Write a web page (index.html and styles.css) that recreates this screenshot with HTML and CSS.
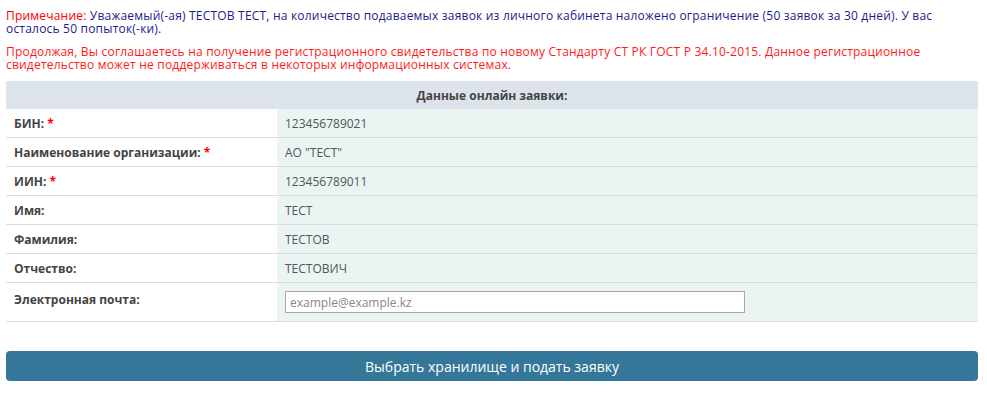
FILE: index.html
```html
<!DOCTYPE html>
<html lang="ru">
<head>
    <meta charset="UTF-8">
    <meta name="viewport" content="width=device-width, initial-scale=1.0">
    <link rel="stylesheet" href="styles.css">
    <title>Онлайн заявка</title>
</head>
<body>
    <div class="request">
        <p class="request__note">
            <span class="request__note-title">Примечание:</span> Уважаемый(-ая) ТЕСТОВ ТЕСТ, на количество подаваемых заявок из личного кабинета наложено ограничение (50 заявок за 30 дней). У вас осталось 50 попыток(-ки).
        </p>
        <p class="request__warning">
            Продолжая, Вы соглашаетесь на получение регистрационного свидетельства по новому Стандарту СТ РК ГОСТ Р 34.10-2015. Данное регистрационное свидетельство может не поддерживаться в некоторых информационных системах.
        </p>

        <table class="request-table">
            <thead>
                <tr>
                    <th colspan="2" class="request-table__head">Данные онлайн заявки:</th>
                </tr>
            </thead>
            <tbody>
                <tr>
                    <td class="request-table__label">БИН: <span class="required">*</span></td>
                    <td class="request-table__value">123456789021</td>
                </tr>
                <tr>
                    <td class="request-table__label">Наименование организации: <span class="required">*</span></td>
                    <td class="request-table__value">АО "ТЕСТ"</td>
                </tr>
                <tr>
                    <td class="request-table__label">ИИН: <span class="required">*</span></td>
                    <td class="request-table__value">123456789011</td>
                </tr>
                <tr>
                    <td class="request-table__label">Имя:</td>
                    <td class="request-table__value">ТЕСТ</td>
                </tr>
                <tr>
                    <td class="request-table__label">Фамилия:</td>
                    <td class="request-table__value">ТЕСТОВ</td>
                </tr>
                <tr>
                    <td class="request-table__label">Отчество:</td>
                    <td class="request-table__value">ТЕСТОВИЧ</td>
                </tr>
                <tr class="request-table__row--tall">
                    <td class="request-table__label">Электронная почта:</td>
                    <td class="request-table__value">
                        <input class="request-table__input" type="email" placeholder="example@example.kz">
                    </td>
                </tr>
            </tbody>
        </table>

        <button class="request__submit" type="button">Выбрать хранилище и подать заявку</button>
    </div>
</body>
</html>
```

FILE: styles.css
```css
body {
    margin: 0;
    padding: 0;
    font-family: "Open Sans", "Liberation Sans", sans-serif;
    background-color: #ffffff;
    color: #444444;
}

.request {
    padding: 6px 9px 0 6px;
}

.request__note,
.request__warning {
    margin: 0;
    font-size: 12px;
    line-height: 13px;
    letter-spacing: 0.2px;
}
.request__note {
    color: #1c1c8a;
    padding-top: 3px;
}
.request__note-title {
    color: #ff0000;
}
.request__warning {
    color: #ff1a1a;
    margin-top: 10px;
}

.request-table {
    width: 100%;
    border-collapse: collapse;
    margin-top: 10px;
    font-size: 12px;
}
.request-table td,
.request-table th {
    border-bottom: 1px solid #dcdcdc;
    padding: 0 8px;
    height: 28px;
    text-align: left;
}
.request-table__head {
    background-color: #dde3ea;
    text-align: center !important;
    font-weight: 700;
    color: #444444;
    height: 28px !important;
    border-bottom: none !important;
}
.request-table__label {
    width: 255px;
    font-weight: 700;
    color: #444444;
    background-color: #ffffff;
}
.request-table__value {
    background-color: #eaf4f2;
    color: #555555;
}
.request-table__row--tall td {
    height: 30px;
    vertical-align: top;
    padding-top: 8px;
}
.required {
    color: #ff0000;
}

.request-table__input {
    box-sizing: border-box;
    width: 460px;
    height: 22px;
    border: 1px solid #a9a9a9;
    padding: 0 4px;
    margin: 0;
    font-family: inherit;
    font-size: 12px;
    color: #555555;
}
.request-table__input::placeholder {
    color: #888888;
}

.request__submit {
    display: block;
    width: 100%;
    height: 30px;
    margin-top: 29px;
    border: none;
    border-radius: 4px;
    background-color: #357799;
    color: #ffffff;
    font-family: inherit;
    font-size: 14px;
    cursor: pointer;
}
```
